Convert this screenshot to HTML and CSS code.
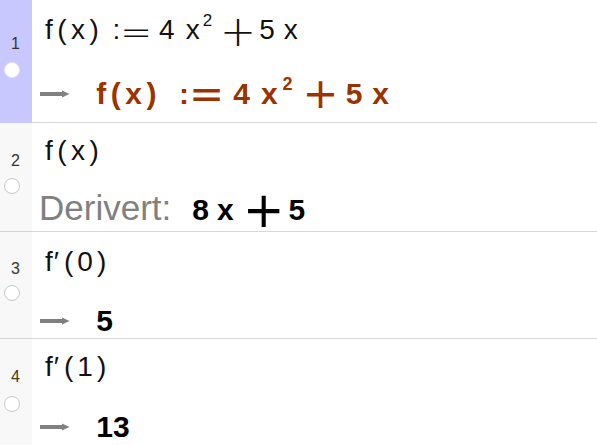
FILE: index.html
```html
<!DOCTYPE html>
<html>
<head>
<meta charset="utf-8">
<link rel="stylesheet" href="styles.css">
</head>
<body>
<div class="cas">
  <div class="row row1 selected">
    <div class="gutter">
      <span class="num">1</span>
      <span class="dot"></span>
    </div>
    <div class="cell">
      <div class="input"><span class="fx">f(x)</span><span class="ml9">:</span><span class="op eq">=</span><span class="ml7">4</span><span class="ml11">x</span><sup class="ml3">2</sup><span class="op plus ml8">+</span><span class="ml3">5</span><span class="ml9">x</span></div>
      <div class="output brown">
        <svg class="arrow" width="30" height="8" viewBox="0 0 30 8"><rect x="0" y="2" width="23" height="4" fill="#808080"/><path d="M22 0.5 L29.5 4 L22 7.5 Z" fill="#808080"/></svg>
        <span class="res"><span class="fx ml-arrow">f(x)</span><span class="ml18">:</span><span class="op eq">=</span><span class="ml9">4</span><span class="ml11">x</span><sup class="ml5">2</sup><span class="op plus ml10">+</span><span class="ml7">5</span><span class="ml10">x</span></span>
      </div>
    </div>
  </div>
  <div class="row row2">
    <div class="gutter">
      <span class="num">2</span>
      <span class="dot"></span>
    </div>
    <div class="cell">
      <div class="input"><span class="fx">f(x)</span></div>
      <div class="output"><span class="label">Derivert:</span><span class="res"><span class="ml21">8</span><span class="ml8">x</span><span class="op plus big ml9">+</span><span class="ml4">5</span></span></div>
    </div>
  </div>
  <div class="row row3">
    <div class="gutter">
      <span class="num">3</span>
      <span class="dot"></span>
    </div>
    <div class="cell">
      <div class="input"><span class="fp">f′</span><span class="fq">(0)</span></div>
      <div class="output">
        <svg class="arrow" width="30" height="8" viewBox="0 0 30 8"><rect x="0" y="2" width="23" height="4" fill="#808080"/><path d="M22 0.5 L29.5 4 L22 7.5 Z" fill="#808080"/></svg>
        <span class="res ml-arrow">5</span>
      </div>
    </div>
  </div>
  <div class="row row4">
    <div class="gutter">
      <span class="num">4</span>
      <span class="dot"></span>
    </div>
    <div class="cell">
      <div class="input"><span class="fp">f′</span><span class="fq">(1)</span></div>
      <div class="output">
        <svg class="arrow" width="30" height="8" viewBox="0 0 30 8"><rect x="0" y="2" width="23" height="4" fill="#808080"/><path d="M22 0.5 L29.5 4 L22 7.5 Z" fill="#808080"/></svg>
        <span class="res ml-arrow">13</span>
      </div>
    </div>
  </div>
</div>
</body>
</html>
```
FILE: styles.css
```css
html, body {
  margin: 0;
  padding: 0;
  background: #ffffff;
}
body {
  font-family: "Liberation Sans", Arial, sans-serif;
  width: 597px;
  height: 445px;
  overflow: hidden;
}
.cas {
  display: flex;
  flex-direction: column;
}
.row {
  display: flex;
  border-bottom: 1px solid #d6d6d6;
  box-sizing: border-box;
}
.row1 { height: 123px; border-bottom: none; }
.row1 .cell { border-bottom: 1px solid #d6d6d6; }
.row2 { height: 109px; }
.row3 { height: 107px; }
.row4 { height: 106px; border-bottom: none; }
.gutter {
  width: 32px;
  flex: none;
  background: #f8f8f8;
  display: flex;
  flex-direction: column;
  align-items: flex-start;
  padding-top: 31px;
  box-sizing: border-box;
}
.row1 .gutter { padding-top: 37px; }
.row3 .gutter { padding-top: 30px; }
.row4 .gutter { padding-top: 31px; }
.selected .gutter {
  background: #c8c8ff;
}
.num {
  font-size: 16px;
  line-height: 14px;
  height: 14px;
  color: #333333;
  margin-left: 11px;
}
.row4 .num { color: #4a3a10; }
.dot {
  width: 14px;
  height: 14px;
  border-radius: 50%;
  background: #ffffff;
  border: 1.5px solid #c8c8c8;
  margin-top: 10px;
  margin-left: 4px;
}
.row1 .dot { margin-top: 11px; border-color: #e4e4fa; }
.row3 .dot { margin-top: 9px; }
.row4 .dot { margin-top: 12px; }
.cell {
  flex: 1;
  padding-left: 13px;
  box-sizing: border-box;
}
.input {
  font-size: 28px;
  line-height: 32px;
  height: 32px;
  margin-top: 14px;
  color: #111111;
  white-space: nowrap;
}
.row2 .input { margin-top: 12px; }
.row4 .input { margin-top: 12px; }
.fx { letter-spacing: 4.5px; }
.fp { letter-spacing: 1px; }
.fq { letter-spacing: 4px; margin-left: 4px; }
.input sup {
  font-size: 17px;
  vertical-align: 0;
  position: relative;
  top: -13px;
}
.res sup {
  font-size: 18px;
  vertical-align: 0;
  position: relative;
  top: -14px;
}
.op {
  font-family: "DejaVu Sans", sans-serif;
  font-weight: 200;
  line-height: 10px;
}
.op.eq {
  font-size: 38px;
  vertical-align: -6px;
}
.op.plus {
  font-size: 43px;
  vertical-align: -7px;
}
.res .op {
  font-weight: normal;
}
.res .op.eq {
  font-size: 42px;
  vertical-align: -4px;
}
.res .op.plus {
  font-size: 43px;
  vertical-align: -4px;
}
.res .op.plus.big {
  font-size: 50px;
  vertical-align: -7px;
}
.output {
  margin-top: 31px;
  height: 34px;
  line-height: 34px;
  font-size: 30px;
  margin-left: -5px;
  white-space: nowrap;
}
.row2 .output { margin-top: 24px; margin-left: -6px; }
.row3 .output { margin-top: 26px; }
.row4 .output { margin-top: 27px; }
.arrow {
  vertical-align: 6px;
}
.res {
  font-size: 30px;
  font-weight: bold;
  color: #000000;
}
.brown .res { color: #993300; }
.label {
  font-size: 35px;
  color: #808080;
}
.ml-arrow { margin-left: 18px; }
.ml3 { margin-left: 3px; }
.ml4 { margin-left: 4px; }
.ml5 { margin-left: 5px; }
.ml7 { margin-left: 7px; }
.ml8 { margin-left: 8px; }
.ml9 { margin-left: 9px; }
.ml10 { margin-left: 10px; }
.ml11 { margin-left: 11px; }
.ml18 { margin-left: 18px; }
.ml21 { margin-left: 21px; }
```
